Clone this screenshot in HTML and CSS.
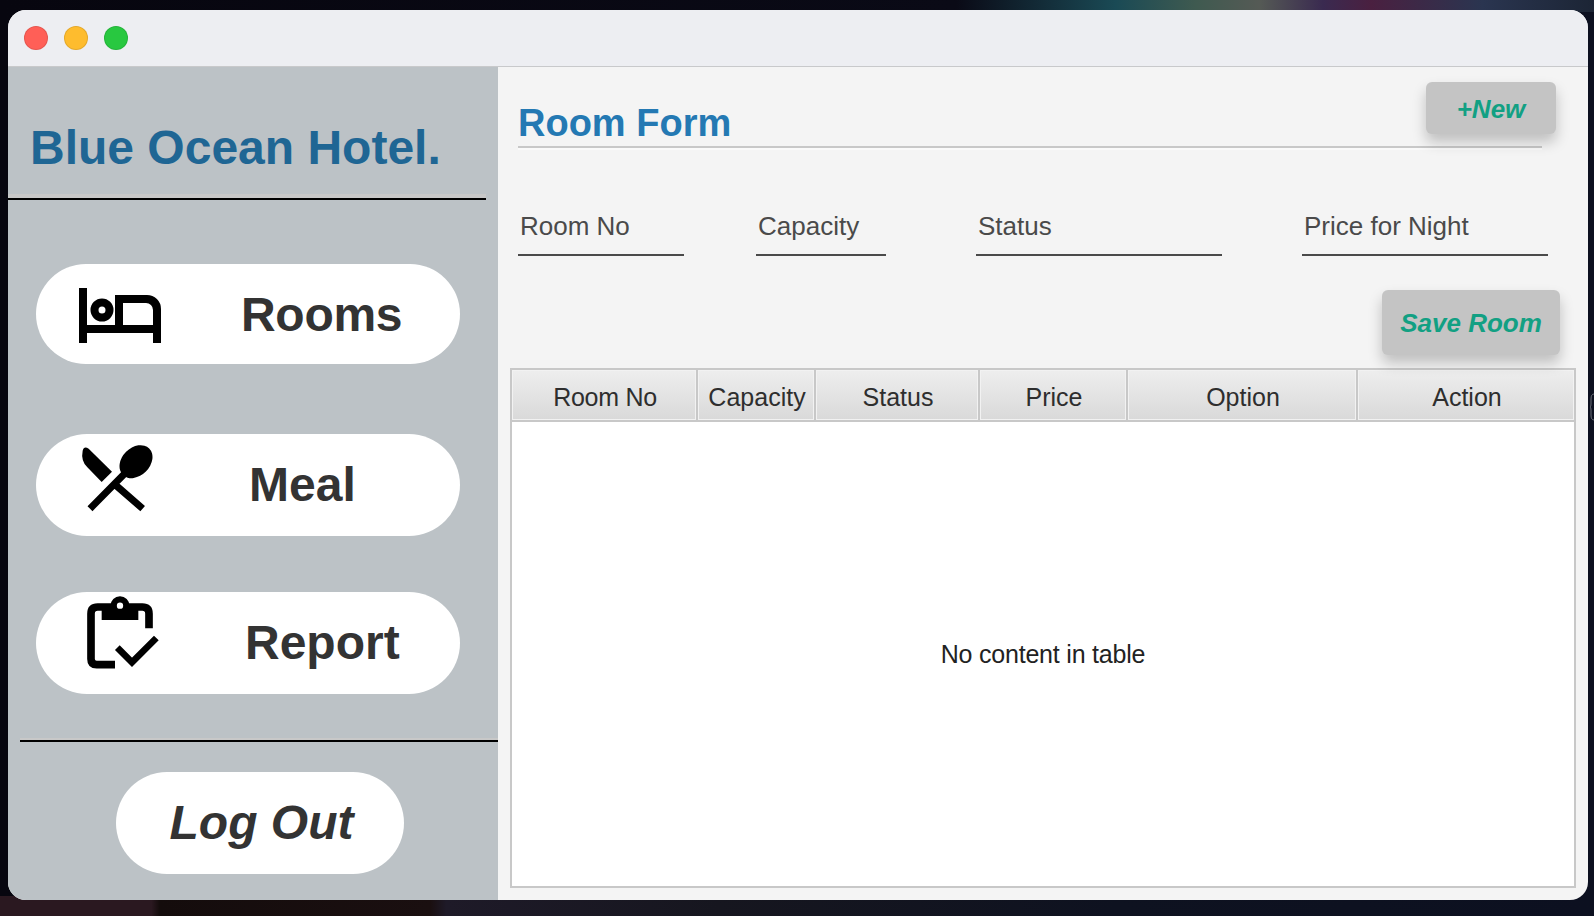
FILE: index.html
```html
<!DOCTYPE html>
<html lang="en">
<head>
  <meta charset="UTF-8">
  <title>Blue Ocean Hotel</title>
  <link rel="stylesheet" href="styles.css">
</head>
<body>
  <div class="window">
    <!-- Title bar -->
    <div class="titlebar">
      <span class="light red"></span>
      <span class="light yellow"></span>
      <span class="light green"></span>
    </div>

    <div class="content">
      <!-- Sidebar -->
      <aside class="sidebar">
        <h1 class="brand">Blue Ocean Hotel.</h1>
        <div class="rule rule-top"></div>

        <a class="pill pill-rooms">
          <svg class="icon icon-bed" viewBox="0 0 82 56" width="82" height="56">
            <path fill-rule="evenodd" d="M0 0H8V37H36V7H68A14 14 0 0 1 82 21V55H74V45H8V55H0ZM44 15V37H74V22A7 7 0 0 0 67 15Z"/>
            <circle cx="23" cy="22" r="7.5" fill="none" stroke="#000" stroke-width="8"/>
          </svg>
          <span class="pill-label">Rooms</span>
        </a>

        <a class="pill pill-meal">
          <svg class="icon" viewBox="60 30 240 225" width="80" height="75">
            <path d="M68 62Q72 46 86 56L156 125L125 156L82 112Q62 92 68 62Z"/>
            <ellipse cx="228" cy="95" rx="56" ry="42" transform="rotate(-45 228 95)"/>
            <path d="M90 236L195 130M170 168L248 236" fill="none" stroke="#000" stroke-width="21"/>
          </svg>
          <span class="pill-label">Meal</span>
        </a>

        <a class="pill pill-report">
          <svg class="icon" viewBox="60 30 240 225" width="80" height="75">
            <path d="M267 130V86Q267 66 247 66H113Q93 66 93 86V222Q93 239 110 239H165" fill="none" stroke="#000" stroke-width="23"/>
            <rect x="125" y="60" width="110" height="45"/>
            <circle cx="180" cy="62" r="19" fill="#fff" stroke="#000" stroke-width="19"/>
            <path d="M172 188L216 232L289 159" fill="none" stroke="#000" stroke-width="20"/>
          </svg>
          <span class="pill-label">Report</span>
        </a>

        <div class="rule rule-bottom"></div>
        <a class="pill-logout">Log Out</a>
      </aside>

      <!-- Room form -->
      <main class="main">
        <div class="form-head">
          <h2 class="form-title">Room Form</h2>
          <button class="action-btn new-btn">+New</button>
        </div>
        <div class="form-rule"></div>

        <div class="fields">
          <div class="field field-room">Room No</div>
          <div class="field field-capacity">Capacity</div>
          <div class="field field-status">Status</div>
          <div class="field field-price">Price for Night</div>
        </div>

        <div class="save-row">
          <button class="action-btn save-btn">Save Room</button>
        </div>

        <table class="rooms-table">
          <colgroup>
            <col class="col-room">
            <col class="col-capacity">
            <col class="col-status">
            <col class="col-price">
            <col class="col-option">
            <col class="col-action">
          </colgroup>
          <thead>
            <tr>
              <th class="th-tight">Room No</th>
              <th>Capacity</th>
              <th>Status</th>
              <th>Price</th>
              <th>Option</th>
              <th>Action</th>
            </tr>
          </thead>
          <tbody>
            <tr>
              <td colspan="6">No content in table</td>
            </tr>
          </tbody>
        </table>
      </main>
    </div>
  </div>

  <!-- Bit of the desktop wallpaper showing past the window edge -->
  <svg class="wallpaper-mark" viewBox="0 0 4 28" width="4" height="28">
    <path d="M4 1Q1 1 1 6V11Q1 14 0 14Q1 14 1 17V22Q1 27 4 27" fill="none" stroke="#6a6e78" stroke-width="1"/>
  </svg>
</body>
</html>
```

FILE: styles.css
```css
/* General Styles */
* {
  box-sizing: border-box;
}

html,
body {
  height: 100%;
}

body {
  margin: 0;
  padding: 10px 6px 16px 8px;
  overflow: hidden;
  font-family: "Liberation Sans", Arial, sans-serif;
  background-color: #0a0a16;
  background-repeat: no-repeat;
  background-size: 100% 12px, 100% 20px, 100% 100%;
  background-position: top, bottom, center;
  background-image:
    linear-gradient(90deg, #07060f 0%, #0a0a16 60%, #14303c 66%, #1a4a55 70%, #3f5a50 75%, #555a55 79%, #3a2a50 83%, #4a2040 86%, #2a3550 93%, #1c2535 100%),
    linear-gradient(90deg, #2a1820 0%, #2a1820 9.5%, #140c0c 10%, #1a0f10 27%, #1e1a28 28%, #16161f 45%, #0e1220 70%, #0c1020 100%),
    linear-gradient(90deg, #07060f, #0c1020);
}

.wallpaper-mark {
  position: absolute;
  left: 1590px;
  top: 393px;
}

.window {
  height: 890px;
  display: flex;
  flex-direction: column;
  border-radius: 18px;
  overflow: hidden;
  background: #f4f4f4;
}

/* Title bar */
.titlebar {
  height: 57px;
  flex: none;
  display: flex;
  align-items: center;
  gap: 16px;
  padding: 0 0 0 16px;
  background: #edeef2;
  border-bottom: 1px solid #c8c9cb;
}

.light {
  width: 24px;
  height: 24px;
  border-radius: 50%;
  border: 1px solid rgba(0, 0, 0, 0.1);
}

.red { background: #ff5f57; }
.yellow { background: #febc2e; }
.green { background: #28c840; }

.content {
  flex: 1;
  display: flex;
  min-height: 0;
}

/* Sidebar */
.sidebar {
  width: 490px;
  flex: none;
  background: #bcc2c6;
}

.brand {
  margin: 0;
  padding: 54px 0 0 22px;
  height: 127px;
  font-size: 48px;
  line-height: 54px;
  font-weight: bold;
  color: #1f6694;
}

.rule {
  height: 6px;
  border-top: 4px solid #c8c8c8;
  border-bottom: 2px solid #000;
}

.rule-top {
  width: 478px;
}

.rule-bottom {
  height: 4px;
  border-top-width: 2px;
  margin: 44px 0 0 12px;
}

.pill {
  display: flex;
  width: 424px;
  height: 102px;
  margin-left: 28px;
  background: #fff;
  border-radius: 51px;
  color: #333;
}

.pill-rooms {
  height: 100px;
  margin-top: 64px;
}

.pill-meal {
  margin-top: 70px;
}

.pill-report {
  margin-top: 56px;
}

.icon {
  flex: none;
  display: block;
  margin-left: 44px;
}

.icon-bed {
  margin: 24px 0 0 43px;
}

.pill-meal .icon {
  margin-top: 6px;
}

.pill-report .icon {
  margin-top: 3px;
}

.pill-label {
  font-size: 48px;
  font-weight: bold;
  line-height: 101px;
}

.pill-rooms .pill-label {
  margin-left: 80px;
  letter-spacing: -0.3px;
}

.pill-meal .pill-label {
  margin-left: 89px;
}

.pill-report .pill-label {
  margin-left: 85px;
}

.pill-logout {
  display: block;
  width: 288px;
  height: 102px;
  margin: 30px 0 0 108px;
  padding-left: 3px;
  background: #fff;
  border-radius: 51px;
  color: #333;
  font-size: 48px;
  font-weight: bold;
  font-style: italic;
  line-height: 102px;
  text-align: center;
}

/* Room form */
.main {
  flex: 1;
  min-width: 0;
  padding: 15px 11px 11px 12px;
}

.form-head {
  display: flex;
  justify-content: space-between;
  padding: 0 21px 0 8px;
  height: 52px;
}

.form-title {
  margin: 0;
  padding-top: 19px;
  font-size: 38px;
  line-height: 44px;
  color: #2479b3;
}

.action-btn {
  border: 0;
  padding: 0;
  background: #c4c4c4;
  border-radius: 6px;
  box-shadow: 0 8px 14px rgba(0, 0, 0, 0.22);
  color: #12a083;
  font-family: inherit;
  font-size: 26px;
  font-weight: bold;
  font-style: italic;
}

.new-btn {
  width: 130px;
  height: 52px;
  padding-top: 2px;
}

.form-rule {
  height: 4px;
  width: 1024px;
  margin: 12px 0 0 8px;
  border-top: 2px solid #c8c8c8;
  border-bottom: 2px solid #fafafa;
}

.fields {
  display: flex;
  margin: 46px 0 0 8px;
}

.field {
  height: 60px;
  padding: 15px 0 0 2px;
  border-bottom: 2px solid #4a4a4a;
  color: #4a4a4a;
  font-size: 26px;
  line-height: 30px;
}

.field-room {
  width: 166px;
}

.field-capacity {
  width: 130px;
  margin-left: 72px;
}

.field-status {
  width: 246px;
  margin-left: 90px;
}

.field-price {
  width: 246px;
  margin-left: 80px;
}

.save-row {
  display: flex;
  justify-content: flex-end;
  margin-top: 34px;
  padding-right: 17px;
}

.save-btn {
  width: 178px;
  height: 65px;
  padding-top: 2px;
}

/* Table */
.rooms-table {
  width: 1064px;
  height: 520px;
  margin-top: 13px;
  table-layout: fixed;
  border-collapse: collapse;
  border: 2px solid #c8c8c8;
  background: #fff;
}

.col-room { width: 186px; }
.col-capacity { width: 118px; }
.col-status { width: 164px; }
.col-price { width: 148px; }
.col-option { width: 230px; }
.col-action { width: 218px; }

.rooms-table th {
  height: 52px;
  padding: 4px 0 0 2px;
  border: 2px solid #c8c8c8;
  background: linear-gradient(#eeeeee, #d9d9d9);
  box-shadow: inset 0 0 0 1px #f2f2f2;
  color: #2e2e2e;
  font-size: 25px;
  font-weight: normal;
  white-space: nowrap;
}

.rooms-table .th-tight {
  letter-spacing: -0.3px;
}

.rooms-table td {
  padding: 0;
  text-align: center;
  color: #222;
  font-size: 25px;
  letter-spacing: -0.2px;
}
```
